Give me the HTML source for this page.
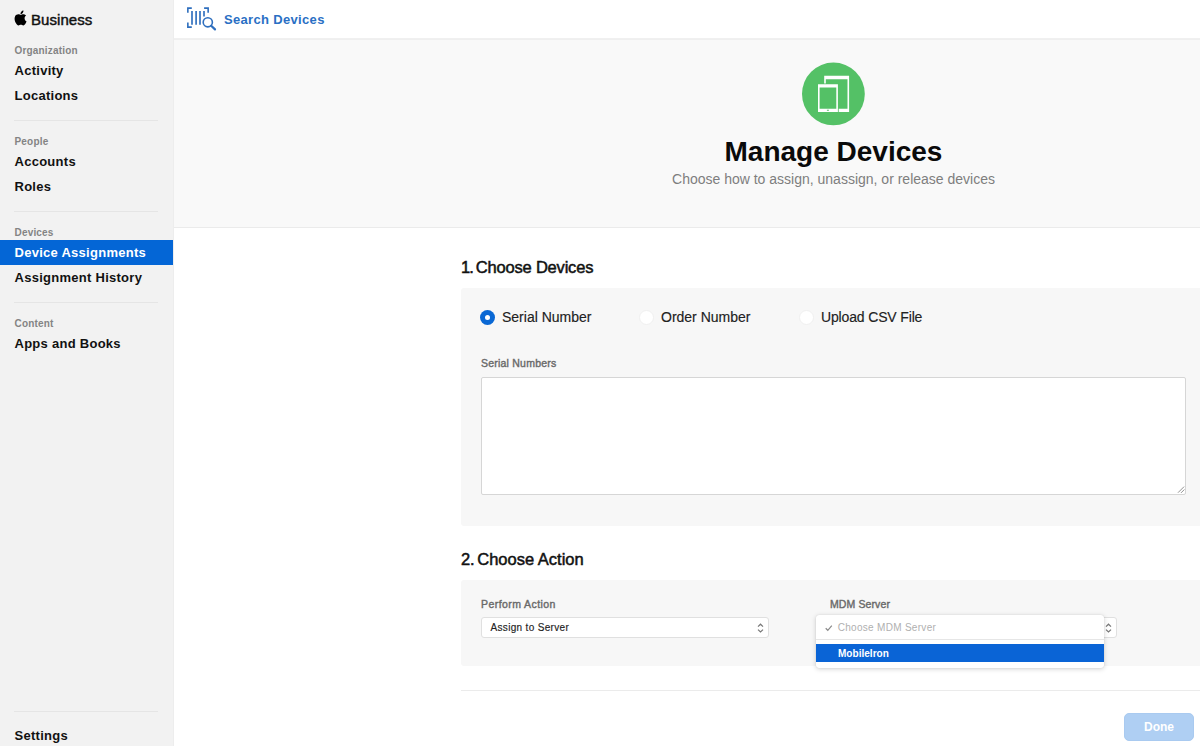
<!DOCTYPE html>
<html lang="en">
<head>
<meta charset="utf-8">
<title>Apple Business Manager</title>
<style>
*{box-sizing:border-box;margin:0;padding:0}
html,body{width:1200px;height:746px;overflow:hidden;background:#fff;font-family:"Liberation Sans",sans-serif;color:#111}
.abs{position:absolute}
#sidebar{position:absolute;left:0;top:0;width:174px;height:746px;background:#f2f2f2;border-right:1px solid #ededed}
#sidebar .brand{position:absolute;left:31px;top:11px;font-size:15px;letter-spacing:0.050px;color:#111;line-height:18px;-webkit-text-stroke:0.450px #111}
#sidebar .grp{position:absolute;left:14.500px;font-size:10px;font-weight:bold;color:#848484;line-height:14px;letter-spacing:0.180px}
#sidebar .item{position:absolute;left:0;width:173px;height:25px;padding-left:14.5px;font-size:13px;font-weight:bold;line-height:25px;color:#111;letter-spacing:0.27px}
#sidebar .item.sel{background:#0466d6;color:#fff}
#sidebar .hr{position:absolute;left:14px;width:144px;height:1px;background:#e5e5e5}
#topbar{position:absolute;left:174px;top:0;width:1026px;height:39px;background:#fff;border-bottom:1px solid #f0f0f0}
#topbar .lbl{position:absolute;left:50px;top:11px;font-size:13px;font-weight:bold;color:#2a6fc4;line-height:18px;letter-spacing:0.33px}
#hero{position:absolute;left:174px;top:39px;width:1026px;height:189px;background:#f9f9f9;border-bottom:1px solid #ebebeb;border-top:1px solid #efefef}
#hero h1{position:absolute;left:0;width:1319px;text-align:center;top:94.500px;font-size:28px;font-weight:bold;line-height:34px;color:#0a0a0a;letter-spacing:0px}
#hero p{position:absolute;left:0;width:1319px;text-align:center;top:129.500px;font-size:14px;color:#7e7e7e;line-height:18px}
h2{position:absolute;left:461px;font-size:16.5px;font-weight:normal;color:#111;line-height:20px;-webkit-text-stroke:0.500px #111;letter-spacing:-0.200px}
.panel{position:absolute;left:461px;width:745px;background:#f7f7f7;border-radius:3px}
.radio{position:absolute;width:15px;height:15px;border-radius:50%;background:#fff;border:1px solid #f0f0f0}
.radio.on{background:#0a68d4;border:none}
.radio.on:after{content:"";position:absolute;left:5px;top:5px;width:5px;height:5px;border-radius:50%;background:#fff}
.rlbl{position:absolute;font-size:14px;color:#222;line-height:18px;-webkit-text-stroke:0.150px #222}
.flbl{position:absolute;font-size:10.500px;color:#6a6a6a;line-height:14px;-webkit-text-stroke:0.400px #6a6a6a;letter-spacing:0.220px}
.ta{position:absolute;left:481px;top:377px;width:705px;height:117.500px;background:#fff;border:1px solid #d6d6d6;border-radius:2px}
.dd{position:absolute;height:21px;background:#fff;border:1px solid #e0e0e0;border-radius:3px;font-size:10px;letter-spacing:0.330px;line-height:19px;color:#222;-webkit-text-stroke:0.150px #222;padding-left:8.500px}
.menu{position:absolute;left:815.500px;top:614.500px;width:288px;height:53.500px;background:#fff;border-radius:3px;box-shadow:0 1px 5px rgba(0,0,0,.18),0 0 1px rgba(0,0,0,.16)}
.menu .m1{position:absolute;left:22.200px;top:6.500px;font-size:10px;letter-spacing:0.300px;line-height:14px;color:#b0b0b0}
.menu .sep{position:absolute;left:0;right:0;top:24.500px;height:1px;background:#e6e6e6}
.menu .m2{position:absolute;left:0;right:0;top:29px;height:18.500px;background:#0a64d6;color:#fff;font-size:10px;line-height:20.500px;padding-left:22.500px;font-weight:bold;letter-spacing:0.030px}
#done{position:absolute;left:1124px;top:713px;width:70px;height:28px;border-radius:5px;background:#afcff3;border:1px solid #a9caf0;color:#fff;font-weight:bold;font-size:12px;text-align:center;line-height:27px}
</style>
</head>
<body>
<div id="sidebar">
  <svg class="abs" style="left:12.800px;top:8.900px" width="14.200" height="17.500" viewBox="0 0 13 16"><path fill="#000" d="M10.6 8.5c0-1.6 1.3-2.4 1.4-2.5-.8-1.100-2-1.300-2.400-1.300-1-.1-2 .6-2.500.6s-1.300-.6-2.200-.6C3.700 4.700 2.600 5.400 2 6.400.8 8.500 1.700 11.600 2.900 13.300c.6.800 1.200 1.700 2.100 1.700.900 0 1.200-.5 2.200-.5s1.300.5 2.200.5 1.500-.8 2.100-1.700c.6-1 .9-1.900.9-2-.1 0-1.800-.7-1.800-2.800zM8.900 3.600c.5-.6.800-1.400.7-2.200-.7 0-1.500.5-2 1-.4.500-.8 1.300-.7 2.100.800.100 1.600-.400 2-.900z"/></svg>
  <div class="brand">Business</div>
  <div class="grp" style="top:44px">Organization</div>
  <div class="item" style="top:58px">Activity</div>
  <div class="item" style="top:83px">Locations</div>
  <div class="hr" style="top:120px"></div>
  <div class="grp" style="top:135px">People</div>
  <div class="item" style="top:149px">Accounts</div>
  <div class="item" style="top:174px">Roles</div>
  <div class="hr" style="top:211px"></div>
  <div class="grp" style="top:226px">Devices</div>
  <div class="item sel" style="top:240px">Device Assignments</div>
  <div class="item" style="top:265px">Assignment History</div>
  <div class="hr" style="top:302px"></div>
  <div class="grp" style="top:317px">Content</div>
  <div class="item" style="top:331px">Apps and Books</div>
  <div class="hr" style="top:711px"></div>
  <div class="item" style="top:723px">Settings</div>
</div>
<div id="topbar">
  <svg class="abs" style="left:0;top:0" width="60" height="39" viewBox="174 0 60 39" fill="none" stroke="#2f6fbe">
    <path d="M191.800 8.100H187.850V12.800M187.850 22.500V27.150H191.800M204.100 8.100H208.150V12.800" stroke-width="1.600"/>
    <path d="M192 10.900V24.700M196.100 10.900V24.700M200 10.900V24.700M204 10.900V16.400" stroke-width="1.650"/>
    <circle cx="207.800" cy="22.300" r="4.600" stroke-width="1.600"/>
    <path d="M211.200 25.700L215 29.400" stroke-width="2.200" stroke-linecap="round"/>
  </svg>
  <div class="lbl">Search Devices</div>
</div>
<div id="hero">
  <svg class="abs" style="left:626px;top:20px" width="68" height="68" viewBox="800 60 68 68">
    <circle cx="833.400" cy="93.900" r="31.400" fill="#54c166"/>
    <path fill="#fff" fill-rule="evenodd" d="M824.200 75.700H849.100V112H824.200zM825.800 79.200V108.700H847.500V79.200z"/>
    <rect x="817.200" y="83.500" width="21.500" height="29.300" fill="#54c166"/>
    <path fill="#fff" fill-rule="evenodd" d="M818 84.300H837.900V112H818zM819.600 87.500V108.700H836.300V87.500zM826.900 109.800h2v1h-2z"/>
  </svg>
  <h1>Manage Devices</h1>
  <p>Choose how to assign, unassign, or release devices</p>
</div>

<h2 style="top:256.500px"><span style="margin-right:-1.300px;letter-spacing:-1px">1.</span> Choose Devices</h2>
<div class="panel" style="top:288px;height:238px"></div>
<div class="radio on" style="left:480px;top:310px"></div><div class="rlbl" style="left:502px;top:308px">Serial Number</div>
<div class="radio" style="left:639px;top:310px"></div><div class="rlbl" style="left:661px;top:308px">Order Number</div>
<div class="radio" style="left:799px;top:310px"></div><div class="rlbl" style="left:821px;top:308px;letter-spacing:-0.150px">Upload CSV File</div>
<div class="flbl" style="left:481px;top:356px">Serial Numbers</div>
<div class="ta"></div>
<svg class="abs" style="left:1170px;top:480px" width="20" height="16" viewBox="1170 480 20 16" fill="none" stroke="#868686" stroke-width="0.900"><path d="M1178 492.700L1184.100 486.600M1181 492.900L1184.400 489.500"/></svg>

<h2 style="top:548.500px"><span style="margin-right:-1.500px">2.</span> <span style="letter-spacing:0px">Choose Action</span></h2>
<div class="panel" style="top:580px;height:86px"></div>
<div class="flbl" style="left:481px;top:597px;letter-spacing:0.430px">Perform Action</div>
<div class="dd" style="left:481px;top:617px;width:288px">Assign to Server
  <svg class="abs" style="right:4.500px;top:4px" width="7" height="12" viewBox="0 0 7 12" fill="none" stroke="#777" stroke-width="1.200"><path d="M1 4.600L3.500 2.200 6 4.600M1 7.600L3.500 10 6 7.600"/></svg>
</div>
<div class="flbl" style="left:830px;top:597px;letter-spacing:0.110px">MDM Server</div>
<div class="dd" style="left:830px;top:617px;width:287px">
  <svg class="abs" style="right:4.500px;top:4px" width="7" height="12" viewBox="0 0 7 12" fill="none" stroke="#777" stroke-width="1.200"><path d="M1 4.600L3.500 2.200 6 4.600M1 7.600L3.500 10 6 7.600"/></svg>
</div>
<div class="menu">
  <svg class="abs" style="left:0;top:0" width="40" height="26" viewBox="815.500 614.500 40 26" fill="none" stroke="#8a8a8a" stroke-width="1.200"><path d="M825.200 627.800L827.300 629.800L831.300 625.200"/></svg>
  <div class="m1">Choose MDM Server</div>
  <div class="sep"></div>
  <div class="m2">MobileIron</div>
</div>
<div class="abs" style="left:461px;top:690px;width:739px;height:1px;background:#ebebeb"></div>
<div id="done">Done</div>
</body>
</html>
